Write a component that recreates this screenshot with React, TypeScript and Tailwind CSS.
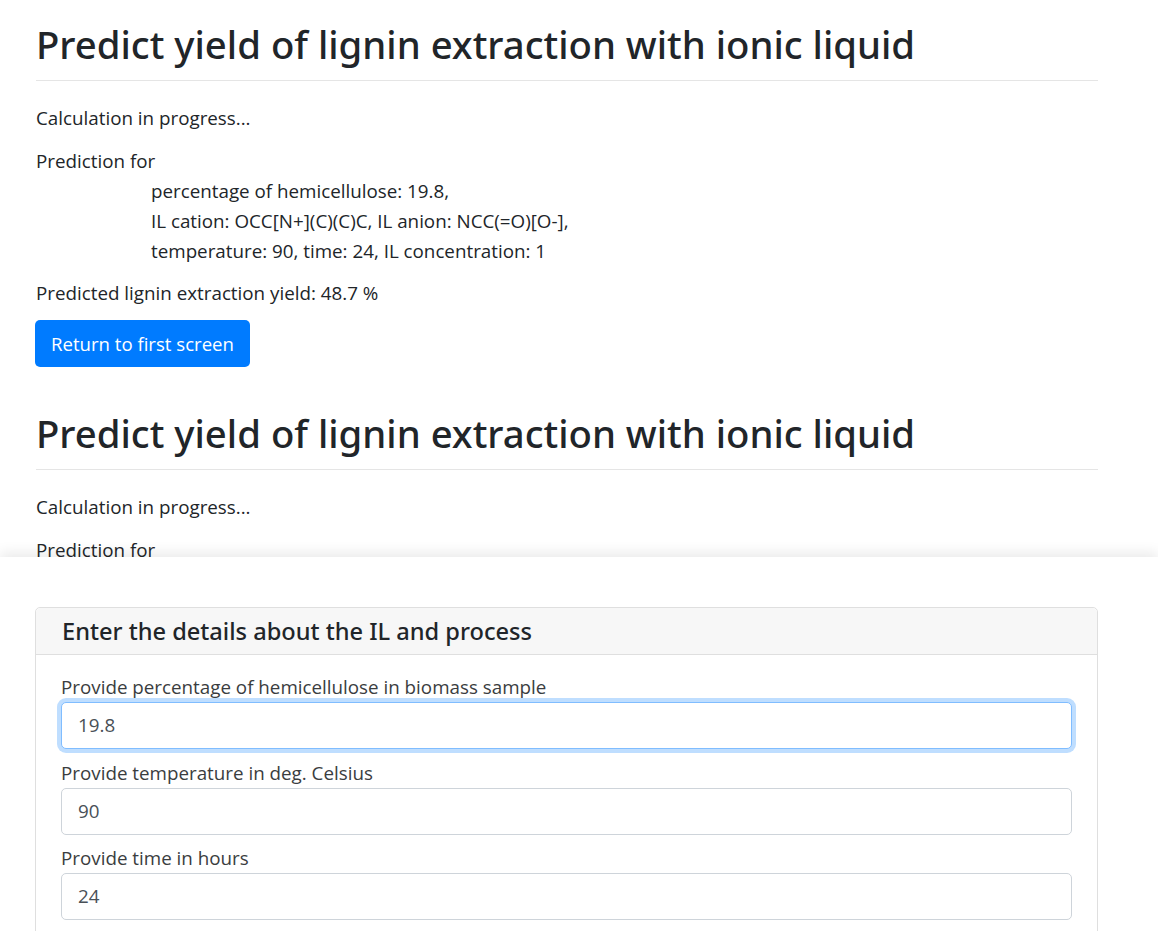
import React from 'react'

const font = { fontFamily: '"Open Sans", "Noto Sans", sans-serif' }
const headFont = { fontFamily: '"Noto Sans", "Open Sans", sans-serif' }

function ResultBlock() {
  return (
    <div className="pt-[20px] pb-[22px]">
      <h1 className="text-[38.3px] leading-[48px] font-medium text-[#212529]" style={headFont}>
        Predict yield of lignin extraction with ionic liquid
      </h1>
      <div className="mt-[12px] border-t border-[#e5e5e5]" />
      <div className="text-[18.8px] leading-[30px] text-[#212529]">
        <p className="mt-[22px]">Calculation in progress...</p>
        <div className="mt-[13px]">
          <p>Prediction for</p>
          <div className="pl-[115px]">
            <p>percentage of hemicellulose: 19.8,</p>
            <p>IL cation: OCC[N+](C)(C)C, IL anion: NCC(=O)[O-],</p>
            <p>temperature: 90, time: 24, IL concentration: 1</p>
          </div>
        </div>
        <p className="mt-[12px]">Predicted lignin extraction yield: 48.7 %</p>
      </div>
      <button className="mt-[12px] h-[47px] px-[16px] rounded-[5px] bg-[#007bff] text-white text-[18.6px] -ml-[1px]">
        Return to first screen
      </button>
    </div>
  )
}

function Field({ label, value, focused }: { label: string; value: string; focused?: boolean }) {
  return (
    <div className="mb-[9.5px]">
      <label className="block text-[18.8px] leading-[28.8px] text-[#3a3d40]">{label}</label>
      <div
        className={
          focused
            ? 'h-[47.5px] flex items-center pl-[16px] rounded-[5px] border border-[#80bdff] ring-4 ring-[#bfdeff] text-[18.8px] text-[#495057] bg-white'
            : 'h-[47px] flex items-center pl-[16px] rounded-[5px] border border-[#ced4da] text-[18.8px] text-[#495057] bg-white'
        }
      >
        {value}
      </div>
    </div>
  )
}

export default function App() {
  return (
    <div className="w-[1158px] h-[931px] overflow-hidden bg-white" style={font}>
      {/* earlier result screens */}
      <div className="h-[557px] overflow-hidden pl-[36px] pr-[60px]">
        <ResultBlock />
        <ResultBlock />
      </div>

      {/* input form panel */}
      <div className="relative z-10 h-[374px] bg-white shadow-[0_-5px_12px_rgba(0,0,0,0.08)] pl-[35px] pr-[60px] pt-[50px]">
        <div className="border border-[#dfdfdf] rounded-[5px] h-[400px]">
          <div className="h-[47px] bg-[#f7f7f7] border-b border-[#dfdfdf] rounded-t-[5px] px-[26px] flex items-center">
            <h4 className="text-[23.6px] leading-[28px] font-medium text-[#212529]" style={headFont}>
              Enter the details about the IL and process
            </h4>
          </div>
          <div className="px-[25px] pt-[18px]">
            <Field label="Provide percentage of hemicellulose in biomass sample" value="19.8" focused />
            <Field label="Provide temperature in deg. Celsius" value="90" />
            <Field label="Provide time in hours" value="24" />
          </div>
        </div>
      </div>
    </div>
  )
}
